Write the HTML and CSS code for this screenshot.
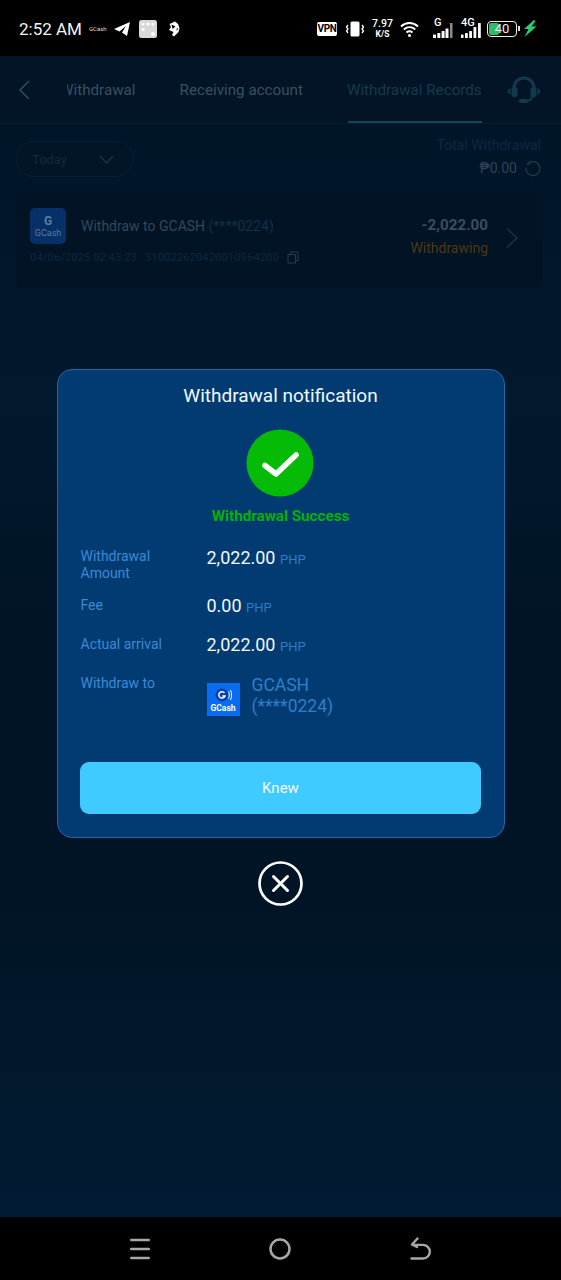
FILE: index.html
```html
<!DOCTYPE html>
<html lang="en">
<head>
<meta charset="utf-8">
<title>Withdrawal notification</title>
<link rel="stylesheet" href="styles.css">
</head>
<body>
<div class="phone">
  <header class="status">
    <div class="status-left">
      <span class="clock">2:52 AM</span>
      <span class="tiny-brand">GCash</span>
      <svg class="st-tg" width="16" height="14" viewBox="0 0 16 14"><path d="M0 7 16 0 13 14 8 10.5 12 4 5.500 9.500Z" fill="#fff"/></svg>
      <svg class="st-app" width="18" height="18" viewBox="0 0 18 18"><rect width="18" height="18" rx="2.500" fill="#d8d8d8"/><g fill="#fff"><circle cx="4" cy="4" r="1.500"/><circle cx="9" cy="4" r="1.500"/><circle cx="14" cy="4" r="1.500"/><circle cx="4" cy="9.500" r="1.500"/><circle cx="14" cy="14" r="2"/></g></svg>
      <svg class="st-bird" width="12" height="16" viewBox="0 0 12 16"><path d="M1.500 3 7 .5 10 3l1.500 4-1 4L6 15.500 4 14l1.500-3L1 9l2-3Z" fill="#fff"/><path d="M3.500 3.500 7.500 5.500 4.500 8Z" fill="#000"/><path d="M9 6.500 10 8 8.500 10Z" fill="#000"/></svg>
    </div>
    <div class="status-right">
      <span class="vpn">VPN</span>
      <svg class="st-vib" width="20" height="16" viewBox="0 0 20 16"><rect x="5.500" y="0.500" width="9" height="15" rx="1.500" fill="#fff"/><path d="M3 4 1.500 6 3 8 1.500 10 3 12M17 4l1.500 2L17 8l1.500 2L17 12" fill="none" stroke="#fff" stroke-width="1.300"/></svg>
      <span class="speed"><span>7.97</span><span class="speed-unit">K/S</span></span>
      <svg class="st-wifi" width="19" height="16" viewBox="0 0 19 16"><g fill="none" stroke="#fff" stroke-width="2"><path d="M1 5.500c5-4.600 12-4.600 17 0"/><path d="M3.800 8.500c3.500-3 8-3 11.500 0"/><path d="M6.500 11.500c2-1.600 4-1.600 6 0"/></g><circle cx="9.500" cy="14.500" r="1.500" fill="#fff"/></svg>
      <span class="signal sig-g">
        <span class="sig-label">G</span>
        <svg width="20" height="16" viewBox="0 0 20 16"><g fill="#fff"><rect x="0" y="12.500" width="3" height="3.500" rx=".5"/><rect x="4.300" y="11" width="3" height="5" rx=".5"/><rect x="8.600" y="9" width="3" height="7" rx=".5"/><rect x="12.500" y="6.500" width="3" height="9.500" rx=".5"/></g><rect x="17" y="1" width="2.500" height="15" fill="#8a8a8a"/></svg>
      </span>
      <span class="signal sig-4g">
        <span class="sig-label">4G</span>
        <svg width="20" height="16" viewBox="0 0 20 16"><g fill="#fff"><rect x="0" y="12.500" width="2.500" height="3.500" rx=".5"/><rect x="4" y="11" width="2.800" height="5" rx=".5"/><rect x="8.200" y="9" width="2.800" height="7" rx=".5"/><rect x="12.500" y="5" width="2.800" height="11" rx=".5"/><rect x="17" y="1" width="2.800" height="15" rx=".5"/></g></svg>
      </span>
      <span class="battery"><span class="battery-fill"></span><span class="battery-num">40</span></span>
      <svg class="st-bolt" width="15" height="17" viewBox="0 0 15 17"><path d="M12 0 2 9H6.500L2.500 17 14.500 6.500H9.500L13.500 1Z" fill="#2ecc71"/></svg>
    </div>
  </header>

  <main class="app">
    <nav class="topbar">
      <svg class="back" width="12" height="20" viewBox="0 0 12 20"><path d="M11 1 2 10l9 9" fill="none" stroke="#304a5f" stroke-width="1.600"/></svg>
      <div class="tabs">
        <span class="tab tab-first">Withdrawal</span>
        <span class="tab tab-second">Receiving account</span>
        <span class="tab tab-active">Withdrawal Records</span>
      </div>
      <svg class="headset" width="34" height="30" viewBox="0 0 34 30"><path d="M7 17V13a10 10 0 0 1 20 0v4" fill="none" stroke="#123a4c" stroke-width="3"/><rect x="4.500" y="12" width="6" height="10" rx="2.500" fill="#123a4c"/><rect x="23.500" y="12" width="6" height="10" rx="2.500" fill="#123a4c"/><path d="M1 15 3.500 13v7L1 18ZM33 15l-2.500-2v7l2.500-2Z" fill="#123a4c"/><path d="M25 21c0 4-4 5-7 5" fill="none" stroke="#123a4c" stroke-width="2"/><rect x="12" y="24" width="9" height="4" rx="2" fill="#123a4c"/></svg>
    </nav>

    <section class="filters">
      <div class="select">
        <span>Today</span>
        <svg width="15" height="9" viewBox="0 0 15 9"><path d="M1 1l6.500 7L14 1" fill="none" stroke="#1d3346" stroke-width="1.300"/></svg>
      </div>
      <div class="total">
        <div class="total-label">Total Withdrawal</div>
        <div class="total-value">
          <span>₱0.00</span>
          <svg width="17" height="17" viewBox="0 0 17 17"><path d="M5 2.800a7 7 0 1 1-3 4.700M5.500 1v3H2.500" fill="none" stroke="#1d3f4a" stroke-width="1.300"/></svg>
        </div>
      </div>
    </section>

    <article class="record">
      <div class="record-main">
        <div class="record-title">
          <span class="gcash-mini"><span class="g-mark">G</span><span class="g-word">GCash</span></span>
          <span class="record-name">Withdraw to GCASH <span class="record-acct">(****0224)</span></span>
        </div>
        <div class="record-meta">
          <span>04/06/2025 02:43:23</span>
          <span>310022620420010964200</span>
          <svg width="12" height="13" viewBox="0 0 12 13"><path d="M1 3.500h7.500V12H1ZM3.500 3.500V1H11v8.500H8.500" fill="none" stroke="#253d50" stroke-width="1"/></svg>
        </div>
      </div>
      <div class="record-side">
        <div class="record-amount">-2,022.00</div>
        <div class="record-status">Withdrawing</div>
      </div>
      <svg class="record-chev" width="14" height="22" viewBox="0 0 14 22"><path d="M2 1.500 12 11 2 20.500" fill="none" stroke="#1f3648" stroke-width="1.300"/></svg>
    </article>

    <div class="overlay">
      <div class="modal">
        <h1 class="modal-title">Withdrawal notification</h1>
        <svg class="check" width="68" height="68" viewBox="0 0 68 68"><circle cx="34" cy="34" r="33.500" fill="#06bb06"/><path d="M19 36.500 30 45 50 26" fill="none" stroke="#fff" stroke-width="5.500" stroke-linecap="round" stroke-linejoin="round"/></svg>
        <div class="success">Withdrawal Success</div>
        <dl class="rows">
          <div class="row row-amount">
            <dt>Withdrawal Amount</dt>
            <dd><b>2,022.00</b> <span class="cur">PHP</span></dd>
          </div>
          <div class="row row-fee">
            <dt>Fee</dt>
            <dd><b>0.00</b> <span class="cur">PHP</span></dd>
          </div>
          <div class="row row-actual">
            <dt>Actual arrival</dt>
            <dd><b>2,022.00</b> <span class="cur">PHP</span></dd>
          </div>
          <div class="row row-to">
            <dt>Withdraw to</dt>
            <dd class="dest">
              <span class="gcash-logo">
                <svg width="17" height="14" viewBox="0 0 17 14"><circle cx="7" cy="7" r="6.500" fill="#0a3fb0"/><path d="M9.500 4.800A3.200 3.200 0 1 0 10 8H7.300" fill="none" stroke="#fff" stroke-width="1.500"/><path d="M13.500 3.500c1 2 1 5 0 7M15.500 2c1.500 3 1.500 7 0 10" fill="none" stroke="#fff" stroke-width="1"/></svg>
                <span>GCash</span>
              </span>
              <span class="dest-name">GCASH (****0224)</span>
            </dd>
          </div>
        </dl>
        <button class="knew" type="button">Knew</button>
      </div>
      <svg class="close" width="45" height="45" viewBox="0 0 45 45"><circle cx="22.500" cy="22.500" r="21" fill="none" stroke="#fff" stroke-width="2.700"/><path d="M15.500 15.500 29.500 29.500M29.500 15.500 15.500 29.500" stroke="#fff" stroke-width="3" stroke-linecap="round"/></svg>
    </div>
  </main>

  <footer class="navbar">
    <svg width="20" height="22" viewBox="0 0 20 22"><g stroke="#a8a8a8" stroke-width="2.600" stroke-linecap="round"><path d="M1.300 2h17.400M1.300 11h17.400M1.300 20h17.400"/></g></svg>
    <svg width="22" height="22" viewBox="0 0 22 22"><circle cx="11" cy="11" r="9.500" fill="none" stroke="#a8a8a8" stroke-width="2.500"/></svg>
    <svg width="21" height="23" viewBox="0 0 21 23"><path d="M1.500 21.500H13a6.800 6.800 0 0 0 0-13.600H3M7.500 1.500 2 7.500l5 2.500" fill="none" stroke="#a8a8a8" stroke-width="2.400" stroke-linecap="round" stroke-linejoin="round"/></svg>
  </footer>
</div>
</body>
</html>
```

FILE: styles.css
```css
* { box-sizing: border-box; }
html, body { margin: 0; padding: 0; background: #000; }
body { font-family: Roboto, "Liberation Sans", sans-serif; }

.phone {
  width: 561px;
  height: 1280px;
  display: flex;
  flex-direction: column;
  overflow: hidden;
}

/* status bar */
.status {
  height: 56px;
  flex: none;
  background: #000;
  color: #fff;
  display: flex;
  align-items: center;
  justify-content: space-between;
  padding: 1px 24px 0 19px;
}
.status-left, .status-right { display: flex; align-items: center; }
.clock { font-size: 17px; color: #f2f2f2; }
.tiny-brand { font-size: 6px; margin-left: 7px; color: #ddd; width: 17px; }
.st-tg { margin-left: 8px; }
.st-app { margin-left: 9px; }
.st-bird { margin-left: 11px; }
.vpn {
  background: #fff;
  color: #000;
  font-size: 10px;
  font-weight: 700;
  width: 20px;
  height: 14px;
  line-height: 14px;
  text-align: center;
  border-radius: 2px;
  letter-spacing: -0.4px;
}
.st-vib { margin-left: 8px; }
.speed {
  display: flex;
  flex-direction: column;
  align-items: center;
  font-size: 10.500px;
  line-height: 12px;
  font-weight: 500;
  margin-left: 7px;
  width: 21px;
}
.speed-unit { font-size: 8.500px; line-height: 9px; font-weight: 700; }
.st-wifi { margin-left: 7px; }
.signal { display: flex; flex-direction: column; margin-left: 14px; width: 20px; height: 18px; position: relative; justify-content: flex-end; }
.sig-label { position: absolute; left: 0; top: -3px; font-size: 11px; line-height: 11px; font-weight: 500; }
.sig-g .sig-label { left: 1px; }
.sig-4g { margin-left: 8px; }
.battery {
  margin-left: 6px;
  width: 30px;
  height: 16px;
  border: 1px solid #eee;
  border-radius: 4px;
  position: relative;
  display: flex;
  align-items: center;
  justify-content: center;
  padding: 1px;
}
.battery::after {
  content: "";
  position: absolute;
  right: -4px;
  top: 4px;
  width: 2px;
  height: 5px;
  background: #ddd;
}
.battery-fill { position: absolute; left: 1px; top: 1px; bottom: 1px; width: 10px; background: #2dbd68; border-radius: 2px; }
.battery-num { position: relative; font-size: 13px; line-height: 14px; color: #eee; }
.st-bolt { margin-left: 5px; }

/* underlying page */
.app {
  position: relative;
  flex: 1;
  background: linear-gradient(#011428 0, #01182d 30%, #011426 50%, #011426 72%, #011b32 100%);
}
.topbar {
  height: 68px;
  display: flex;
  align-items: center;
  padding-left: 18px;
  border-bottom: 1px solid #03202f;
  background: #021426;
}
.back { flex: none; }
.tabs {
  margin-left: 37px;
  width: 415px;
  height: 100%;
  display: flex;
  align-items: center;
  overflow: hidden;
  font-size: 15.200px;
  white-space: nowrap;
  color: #3a5060;
}
.tab { line-height: 68px; height: 68px; flex: none; }
.tab-first { margin-left: -7px; }
.tab-second { margin-left: 44px; }
.tab-active {
  margin-left: 44px;
  color: #173a4d;
  position: relative;
}
.tab-active::after {
  content: "";
  position: absolute;
  left: 1px;
  right: 0;
  bottom: 0;
  height: 3px;
  background: #134552;
}
.headset { margin-left: 25px; flex: none; }

.filters {
  display: flex;
  justify-content: space-between;
  align-items: flex-start;
  padding: 12px 20px 0 16px;
  height: 68px;
}
.select {
  width: 118px;
  height: 36px;
  margin-top: 5px;
  border: 1px solid #03203a;
  background: #011526;
  border-radius: 18px;
  display: flex;
  align-items: center;
  padding: 0 19px 0 15px;
  justify-content: space-between;
  font-size: 13px;
  color: #15293a;
}
.total { text-align: right; }
.total-label { font-size: 14px; line-height: 18px; color: #0c2a40; }
.total-value {
  display: flex;
  justify-content: flex-end;
  align-items: center;
  gap: 7px;
  font-size: 14px;
  line-height: 20px;
  margin-top: 4px;
  color: #304454;
}
.record {
  margin: 0 18px 0 16px;
  height: 96px;
  background: #011324;
  border-radius: 6px;
  display: flex;
  align-items: flex-start;
  padding: 16px 0 0 14px;
  position: relative;
}
.record-main { flex: 1; }
.record-title { display: flex; align-items: center; }
.gcash-mini {
  width: 36px;
  height: 36px;
  background: #063068;
  border-radius: 5px;
  display: flex;
  flex-direction: column;
  align-items: center;
  color: #5c7b9d;
  line-height: 1;
  padding-top: 7px;
}
.g-mark { font-size: 12px; font-weight: 700; }
.g-word { font-size: 9px; margin-top: 2px; }
.record-name { margin-left: 15px; font-size: 14px; color: #33475a; }
.record-acct { color: #12304a; }
.record-meta {
  display: flex;
  align-items: center;
  gap: 8px;
  margin-top: 5px;
  font-size: 11.350px;
  line-height: 16px;
  color: #0c2840;
  white-space: nowrap;
}
.record-side { text-align: right; padding-top: 7px; margin-right: 17px; }
.record-amount { font-size: 15.200px; font-weight: 700; line-height: 20px; color: #3a4e5e; }
.record-status { font-size: 14px; line-height: 18px; margin-top: 4px; color: #4a3a14; }
.record-chev { margin: 19px 24px 0 0; flex: none; }

/* dialog */
.overlay {
  position: absolute;
  left: 0;
  right: 0;
  top: 313px;
  display: flex;
  flex-direction: column;
  align-items: center;
}
.modal {
  width: 448px;
  height: 469px;
  background: #013b72;
  border: 1.500px solid #2068ac;
  border-radius: 15px;
  padding: 14px 23px 0;
  display: flex;
  flex-direction: column;
  align-items: center;
}
.modal-title {
  margin: 0;
  font-size: 19px;
  font-weight: 400;
  line-height: 24px;
  color: #f2f8ff;
}
.check { margin-top: 21px; margin-left: -1px; }
.success {
  margin-top: 10px;
  font-size: 15.200px;
  font-weight: 700;
  line-height: 18px;
  color: #06b006;
}
.rows { margin: 23px 0 0; width: 100%; }
.row { display: flex; align-items: flex-start; }
.row dt {
  width: 126px;
  font-size: 14px;
  line-height: 17px;
  color: #3a8ad4;
  padding-right: 40px;
  flex: none;
}
.row dd { margin: 0; display: flex; align-items: center; }
.row b { font-weight: 400; font-size: 18px; line-height: 22px; color: #f2f8ff; margin-right: 4.500px; }
.cur { font-size: 13px; color: #2f7cc4; padding-top: 3px; }
.row-amount { height: 49px; }
.row-amount dd { margin-top: -1px; }
.row-fee { height: 39px; }
.row-fee dd { margin-top: -2px; }
.row-actual { height: 39px; }
.row-actual dd { margin-top: -2px; }
.row-to { height: 87px; }
.dest { align-items: flex-start; margin-top: -7px; }
.gcash-logo {
  width: 33px;
  height: 33px;
  margin-top: 6px;
  background: #0a6cf2;
  color: #fff;
  display: flex;
  flex-direction: column;
  align-items: center;
  padding-top: 5px;
  font-size: 8.500px;
  font-weight: 700;
  line-height: 10px;
}
.gcash-logo span { margin-top: 1px; }
.dest-name {
  width: 110px;
  margin-left: 12px;
  font-size: 17.500px;
  line-height: 21px;
  color: #2f7fc8;
}
.knew {
  width: 401px;
  height: 52px;
  flex: none;
  border: 0;
  border-radius: 9px;
  background: #3fcbff;
  color: #f2fbff;
  font: 400 15px Roboto, "Liberation Sans", sans-serif;
}
.close { margin-top: 23px; }

/* navigation bar */
.navbar {
  height: 63px;
  flex: none;
  background: #000;
  display: flex;
  align-items: center;
  justify-content: space-between;
  padding: 0 130px 0 130px;
}
```
